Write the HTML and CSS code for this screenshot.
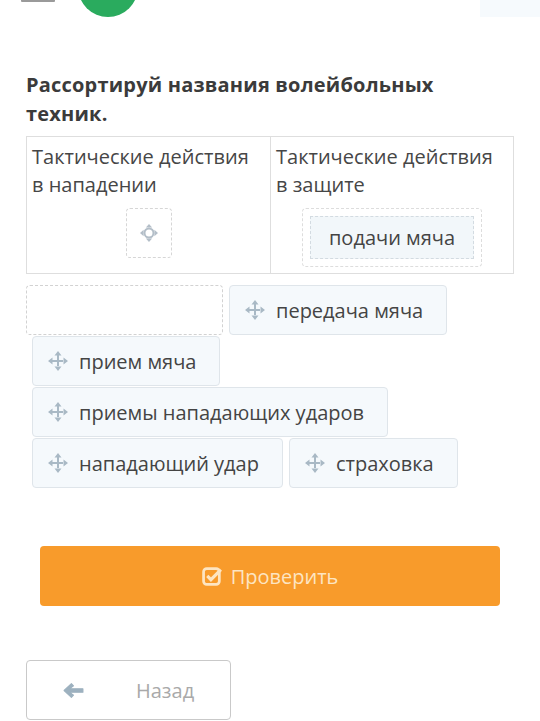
FILE: index.html
```html
<!DOCTYPE html>
<html lang="ru">

<head>
  <meta charset="UTF-8">
  <title>Рассортируй названия</title>
  <link rel="stylesheet" href="styles.css">
</head>

<body>
  <div class="topbar">
    <div class="burger"><span></span><span></span><span></span></div>
    <div class="logo"></div>
    <div class="corner"></div>
  </div>

  <div class="task">
    <h2 class="task-title">Рассортируй названия волейбольных техник.</h2>

    <div class="sort-table">
      <div class="sort-col">
        <div class="sort-head">Тактические действия в нападении</div>
        <div class="drop-empty">
          <svg class="move-icon" viewBox="0 0 20 20" width="18" height="18">
            <circle cx="10" cy="10" r="5" fill="none" stroke="#b3bec8" stroke-width="2.2"/>
            <path d="M10 0 L13.5 4 L6.5 4 Z M10 20 L13.5 16 L6.5 16 Z M0 10 L4 6.5 L4 13.5 Z M20 10 L16 6.5 L16 13.5 Z" fill="#b3bec8"/>
          </svg>
        </div>
      </div>
      <div class="sort-col">
        <div class="sort-head">Тактические действия в защите</div>
        <div class="drop-filled">
          <div class="placed">подачи мяча</div>
        </div>
      </div>
    </div>

    <div class="pool">
      <div class="slot"></div>
      <div class="chip">
        <svg class="move-icon" viewBox="0 0 20 20" width="20" height="20"><path d="M9 4 H11 V9 H16 V11 H11 V16 H9 V11 H4 V9 H9 Z M10 0 L13.5 4.5 L6.5 4.5 Z M10 20 L13.5 15.5 L6.5 15.5 Z M0 10 L4.5 6.5 L4.5 13.5 Z M20 10 L15.5 6.5 L15.5 13.5 Z" fill="#a9b9c5"/></svg>
        передача мяча
      </div>
      <div class="chip">
        <svg class="move-icon" viewBox="0 0 20 20" width="20" height="20"><path d="M9 4 H11 V9 H16 V11 H11 V16 H9 V11 H4 V9 H9 Z M10 0 L13.5 4.5 L6.5 4.5 Z M10 20 L13.5 15.5 L6.5 15.5 Z M0 10 L4.5 6.5 L4.5 13.5 Z M20 10 L15.5 6.5 L15.5 13.5 Z" fill="#a9b9c5"/></svg>
        прием мяча
      </div>
      <div class="chip">
        <svg class="move-icon" viewBox="0 0 20 20" width="20" height="20"><path d="M9 4 H11 V9 H16 V11 H11 V16 H9 V11 H4 V9 H9 Z M10 0 L13.5 4.5 L6.5 4.5 Z M10 20 L13.5 15.5 L6.5 15.5 Z M0 10 L4.5 6.5 L4.5 13.5 Z M20 10 L15.5 6.5 L15.5 13.5 Z" fill="#a9b9c5"/></svg>
        приемы нападающих ударов
      </div>
      <div class="chip">
        <svg class="move-icon" viewBox="0 0 20 20" width="20" height="20"><path d="M9 4 H11 V9 H16 V11 H11 V16 H9 V11 H4 V9 H9 Z M10 0 L13.5 4.5 L6.5 4.5 Z M10 20 L13.5 15.5 L6.5 15.5 Z M0 10 L4.5 6.5 L4.5 13.5 Z M20 10 L15.5 6.5 L15.5 13.5 Z" fill="#a9b9c5"/></svg>
        нападающий удар
      </div>
      <div class="chip">
        <svg class="move-icon" viewBox="0 0 20 20" width="20" height="20"><path d="M9 4 H11 V9 H16 V11 H11 V16 H9 V11 H4 V9 H9 Z M10 0 L13.5 4.5 L6.5 4.5 Z M10 20 L13.5 15.5 L6.5 15.5 Z M0 10 L4.5 6.5 L4.5 13.5 Z M20 10 L15.5 6.5 L15.5 13.5 Z" fill="#a9b9c5"/></svg>
        страховка
      </div>
    </div>

    <button class="check-btn">
      <svg viewBox="0 0 20 20" width="21" height="21">
        <rect x="1.5" y="2.5" width="15" height="15" rx="3" fill="none" stroke="#fde5c2" stroke-width="2.6"/>
        <path d="M5 9.5 L8.5 13 L18 3.5" fill="none" stroke="#fde5c2" stroke-width="3"/>
      </svg>
      Проверить
    </button>

    <button class="back-btn">
      <svg viewBox="0 0 20 16" width="21" height="17">
        <path d="M1 8 L8 1.5 L10 3.5 L6.5 6.3 H19 V9.7 H6.5 L10 12.5 L8 14.5 Z" fill="#9db1bf" stroke="#9db1bf" stroke-width="1" stroke-linejoin="round"/>
      </svg>
      <span>Назад</span>
    </button>
  </div>
</body>

</html>
```

FILE: styles.css
```css
body {
  margin: 0;
  font-family: "Open Sans", "Liberation Sans", sans-serif;
  background: #fff;
  overflow: hidden;
}

.topbar {
  display: flex;
  align-items: flex-end;
  height: 60px;
  margin-top: -43px;
  padding-left: 21px;
}

.burger {
  display: flex;
  flex-direction: column;
  gap: 6px;
  width: 34px;
  margin-bottom: 15px;
}

.burger span {
  display: block;
  height: 3px;
  background: #9a9a9a;
  border-radius: 1px;
}

.logo {
  width: 60px;
  height: 60px;
  margin-left: 23px;
  border-radius: 50%;
  background: #2aab5e;
}

.corner {
  width: 60px;
  height: 58px;
  margin-left: auto;
  background: #f6fafd;
}

.task {
  padding: 0 26px;
}

.task-title {
  max-width: 440px;
  margin: 53px 0 8px;
  font-size: 20px;
  line-height: 29px;
  font-weight: 700;
  letter-spacing: 0.2px;
  color: #3b3b3b;
}

.sort-table {
  display: grid;
  grid-template-columns: 1fr 1fr;
  border: 1px solid #dedede;
}

.sort-col + .sort-col {
  border-left: 1px solid #dedede;
}

.sort-head {
  padding: 6px 10px 0 5px;
  font-size: 20px;
  line-height: 28px;
  color: #464646;
}

.drop-empty {
  display: flex;
  align-items: center;
  justify-content: center;
  width: 46px;
  height: 50px;
  box-sizing: border-box;
  margin: 9px auto 0;
  border: 1px dashed #d6d6d6;
  border-radius: 4px;
}

.drop-filled {
  width: 180px;
  box-sizing: border-box;
  margin: 9px auto 6px;
  padding: 7px;
  border: 1px dashed #dddddd;
  border-radius: 4px;
}

.placed {
  display: flex;
  align-items: center;
  justify-content: center;
  height: 43px;
  box-sizing: border-box;
  border: 1px dashed #d3dbe1;
  background: #f2f7fa;
  font-size: 20px;
  color: #444;
}

.pool {
  display: flex;
  flex-wrap: wrap;
  row-gap: 1px;
  margin-top: 11px;
}

.slot {
  width: 197px;
  height: 50px;
  box-sizing: border-box;
  border: 1px dashed #d2d2d2;
  border-radius: 4px;
}

.chip {
  display: flex;
  align-items: center;
  gap: 11px;
  height: 50px;
  box-sizing: border-box;
  margin-left: 6px;
  padding: 0 23px 0 15px;
  border: 1px solid #dfe5ea;
  border-radius: 4px;
  background: #f5f9fc;
  font-size: 20px;
  color: #444;
}

.check-btn {
  display: flex;
  align-items: center;
  justify-content: center;
  gap: 8px;
  width: calc(100% - 28px);
  height: 60px;
  margin: 58px 14px 0;
  border: none;
  border-radius: 4px;
  background: #f89b2b;
  font-family: inherit;
  font-size: 20px;
  color: #fde5c2;
}

.back-btn {
  display: flex;
  align-items: center;
  width: 205px;
  height: 60px;
  margin-top: 54px;
  padding: 0 0 0 36px;
  border: 1px solid #c9c9c9;
  border-radius: 4px;
  background: #fff;
  font-family: inherit;
  font-size: 20px;
  color: #a9a9a9;
}

.back-btn span {
  margin-left: 52px;
}
```
